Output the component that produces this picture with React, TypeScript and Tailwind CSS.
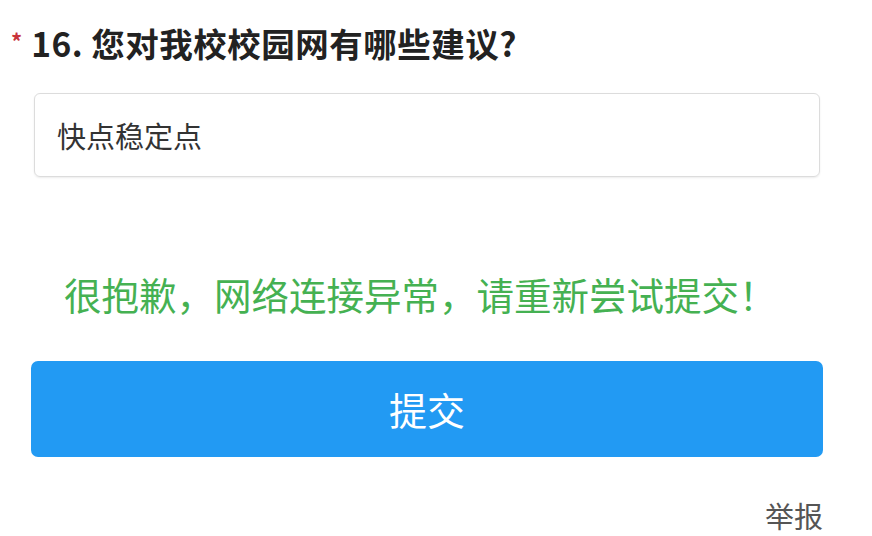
import React from "react";

export default function App() {
  const font = { fontFamily: '"Noto Sans CJK SC", "Noto Sans", sans-serif' };
  return (
    <div className="w-[872px] h-[536px] bg-white overflow-hidden flex flex-col" style={font}>
      <div className="flex items-start pt-[20px] pl-[11px] h-[70px]">
        <span className="text-[#c8333a] text-[22px] leading-none font-bold mt-[9px] mr-[9px]">*</span>
        <span className="text-[#222] text-[33.5px] leading-[46px] font-bold tracking-[0.5px]">16. 您对我校校园网有哪些建议?</span>
      </div>
      <div className="ml-[34px] mt-[23px] w-[786px] h-[84px] border border-[#dcdcdc] rounded-[6px] shadow-[0_1px_2px_rgba(0,0,0,0.08)] flex items-center pl-[22px]">
        <span className="text-[#333] text-[29px] leading-none">快点稳定点</span>
      </div>
      <div className="mt-[95px] ml-[64px] h-[44px] flex items-center">
        <span className="text-[#45b152] text-[37.5px] leading-none">很抱歉，网络连接异常，请重新尝试提交！</span>
      </div>
      <div className="mt-[45px] ml-[31px] w-[792px] h-[96px] bg-[#229af3] rounded-[7px] flex items-center justify-center">
        <span className="text-white text-[38px] leading-none">提交</span>
      </div>
      <div className="mt-[44px] w-[823px] flex justify-end">
        <span className="text-[#555] text-[29px] leading-none">举报</span>
      </div>
    </div>
  );
}
